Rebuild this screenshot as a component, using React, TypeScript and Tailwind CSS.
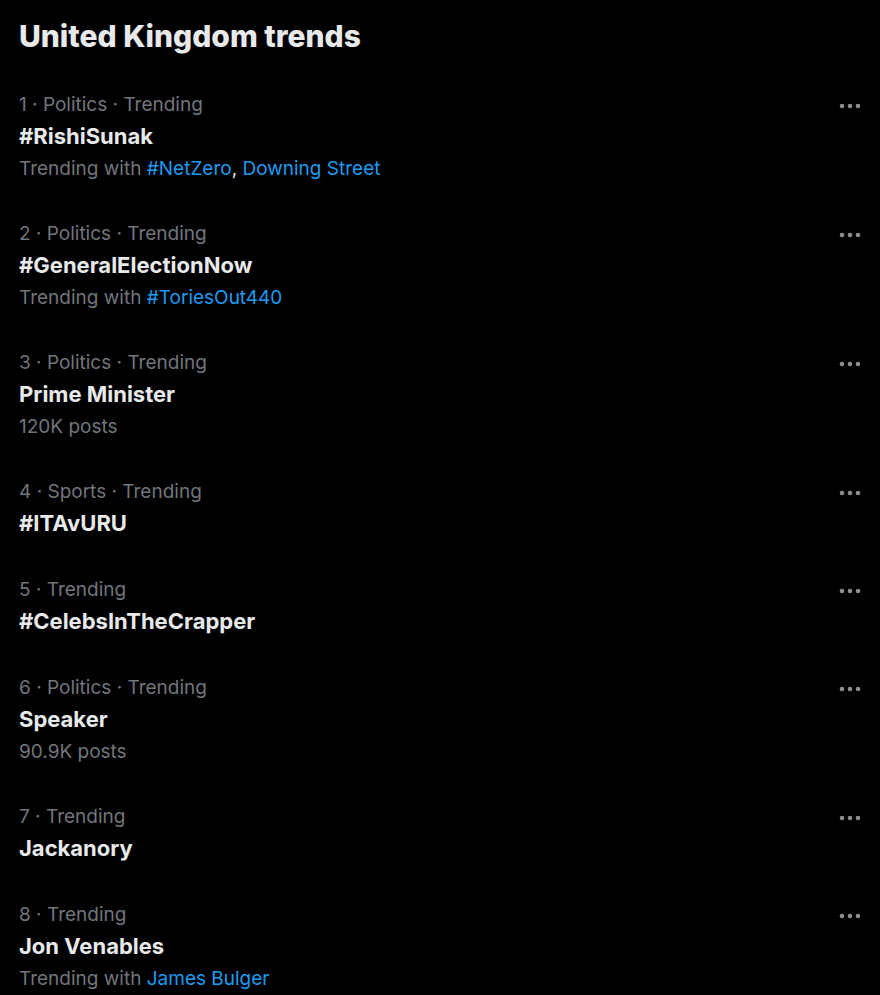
type Trend = {
  rank: number;
  category?: string;
  name: string;
  posts?: string;
  with?: string[];
};

const trends: Trend[] = [
  { rank: 1, category: 'Politics', name: '#RishiSunak', with: ['#NetZero', 'Downing Street'] },
  { rank: 2, category: 'Politics', name: '#GeneralElectionNow', with: ['#ToriesOut440'] },
  { rank: 3, category: 'Politics', name: 'Prime Minister', posts: '120K posts' },
  { rank: 4, category: 'Sports', name: '#ITAvURU' },
  { rank: 5, name: '#CelebsInTheCrapper' },
  { rank: 6, category: 'Politics', name: 'Speaker', posts: '90.9K posts' },
  { rank: 7, name: 'Jackanory' },
  { rank: 8, name: 'Jon Venables', with: ['James Bulger'] },
];

const MoreIcon = () => (
  <svg width="24" height="8" viewBox="0 0 24 8" className="fill-[#8b8f93]">
    <circle cx="4" cy="4" r="2.3" />
    <circle cx="12" cy="4" r="2.3" />
    <circle cx="20" cy="4" r="2.3" />
  </svg>
);

const TrendRow = ({ trend }: { trend: Trend }) => (
  <div className="flex items-start justify-between py-[17px]">
    <div className="flex flex-col">
      <div className="text-[19px] leading-[31px] text-[#71767b]">
        {trend.rank} · {trend.category ? `${trend.category} · ` : ''}Trending
      </div>
      <div className="text-[22px] leading-[33px] font-bold text-[#e7e9ea]">
        {trend.name}
      </div>
      {trend.posts && (
        <div className="text-[19px] leading-[31px] text-[#71767b]">{trend.posts}</div>
      )}
      {trend.with && (
        <div className="text-[19px] leading-[31px] text-[#71767b]">
          Trending with{' '}
          <span className="text-[#1d9bf0]">
            {trend.with.map((w, i) => (
              <span key={w}>
                {w}
                {i < trend.with!.length - 1 && <span className="text-[#e7e9ea]">, </span>}
              </span>
            ))}
          </span>
        </div>
      )}
    </div>
    <div className="mt-[13px]">
      <MoreIcon />
    </div>
  </div>
);

export default function App() {
  return (
    <div
      className="min-h-[995px] w-[880px] overflow-hidden bg-black pl-[19px] pr-[18px]"
      style={{ fontFamily: 'Inter, "Noto Sans", sans-serif' }}
    >
      <h1 className="flex h-[72px] items-center text-[30px] font-extrabold text-[#e7e9ea]">
        United Kingdom trends
      </h1>
      {trends.map((t) => (
        <TrendRow key={t.rank} trend={t} />
      ))}
    </div>
  );
}
